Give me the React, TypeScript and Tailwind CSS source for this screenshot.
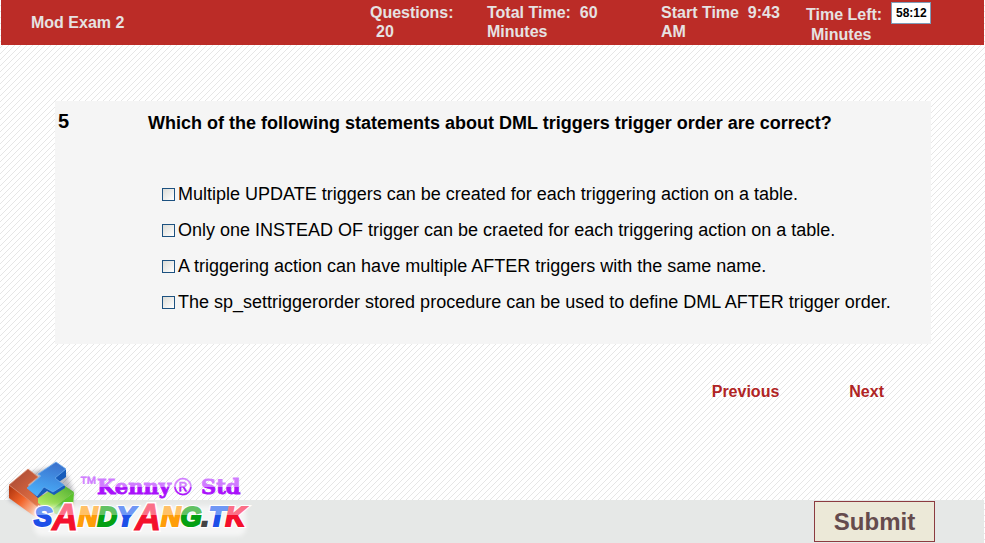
import { useState } from "react";

const options = [
  "Multiple UPDATE triggers can be created for each triggering action on a table.",
  "Only one INSTEAD OF trigger can be craeted for each triggering action on a table.",
  "A triggering action can have multiple AFTER triggers with the same name.",
  "The sp_settriggerorder stored procedure can be used to define DML AFTER trigger order.",
];

const letterColors: Record<string, [string, string]> = {
  blue: ["#6f97f5", "#1d4fe8"],
  red: ["#fb7088", "#f4102c"],
  orange: ["#ffc168", "#ff9d08"],
  green: ["#62c163", "#04a012"],
  grey: ["#777777", "#444444"],
};

const letters: [string, string][] = [
  ["S", "blue"],
  ["A", "red"],
  ["N", "orange"],
  ["D", "green"],
  ["Y", "blue"],
  ["A", "red"],
  ["N", "orange"],
  ["G", "green"],
  [".", "grey"],
  ["T", "blue"],
  ["K", "red"],
];

function Header() {
  return (
    <header className="mx-px flex h-[45px] items-start bg-[#bb2c27] text-base leading-[19px] font-bold text-[#e6e2e2]">
      <h1 className="flex-1 pt-[13px] pl-[30px]">Mod Exam 2</h1>
      <p className="w-[117px] pt-[3px]">
        Questions:
        <br />
        <span className="pl-1.5">20</span>
      </p>
      <p className="w-[174px] pt-[3px]">
        Total Time:&nbsp; 60
        <br />
        Minutes
      </p>
      <p className="w-[145px] pt-[3px]">
        Start Time&nbsp; 9:43
        <br />
        AM
      </p>
      <div className="w-[178px]">
        <div className="flex h-[25px] items-start">
          <label htmlFor="time-left" className="w-[85px] pt-[5px]">
            Time Left:
          </label>
          <input
            id="time-left"
            readOnly
            defaultValue="58:12"
            className="mt-0.5 h-[22px] w-10 border border-[#7f9db9] bg-white pl-1 text-xs font-bold text-black"
          />
        </div>
        <p className="pl-[5px]">Minutes</p>
      </div>
    </header>
  );
}

function Logo() {
  return (
    <svg
      className="absolute bottom-0 left-0"
      width="260"
      height="88"
      viewBox="0 0 260 88"
      role="img"
      aria-label="Kenny Std, SANDYANG.TK"
    >
      <defs>
        <linearGradient id="redTop" x1="0" y1="0" x2="1" y2="1">
          <stop offset="0" stopColor="#a04634" />
          <stop offset="0.5" stopColor="#cc5f3c" />
          <stop offset="1" stopColor="#f0844c" />
        </linearGradient>
        <linearGradient id="redSide" x1="0" y1="0" x2="1" y2="1">
          <stop offset="0" stopColor="#a8300c" />
          <stop offset="0.45" stopColor="#f2642a" />
          <stop offset="1" stopColor="#fff0e0" />
        </linearGradient>
        <linearGradient id="blueTop" x1="0.7" y1="0" x2="0.4" y2="1">
          <stop offset="0" stopColor="#3a70cc" />
          <stop offset="1" stopColor="#4ab0fa" />
        </linearGradient>
        <linearGradient id="greenTop" x1="1" y1="0" x2="0" y2="1">
          <stop offset="0" stopColor="#4fae30" />
          <stop offset="1" stopColor="#c4f86c" />
        </linearGradient>
        <linearGradient id="purple" gradientUnits="userSpaceOnUse" x1="0" y1="22" x2="0" y2="44">
          <stop offset="0.45" stopColor="#d07cff" />
          <stop offset="0.45" stopColor="#a911fb" />
        </linearGradient>
        {Object.entries(letterColors).map(([name, [light, dark]]) => (
          <linearGradient key={name} id={name} gradientUnits="userSpaceOnUse" x1="0" y1="50" x2="0" y2="72">
            <stop offset="0.45" stopColor={light} />
            <stop offset="0.45" stopColor={dark} />
          </linearGradient>
        ))}
        <filter id="soft" x="-20%" y="-20%" width="140%" height="140%">
          <feGaussianBlur stdDeviation="2" />
        </filter>
      </defs>

      <path d="M9 33 L28 18 L56 11 L67 20 L74 38 L71 54 L44 62 L9 45Z" fill="#556" opacity="0.4" filter="url(#soft)" />
      {/* red block */}
      <path d="M9 30 L38 51 L38 64 L9 43Z" fill="url(#redSide)" />
      <path d="M9 30 L28 14 L38 22 L28 30 L47 44 L38 52Z" fill="url(#redTop)" stroke="#dc8a6c" strokeWidth="0.8" />
      {/* green block */}
      <path d="M38 43 L50 36 L56 38 L65 31 L74 37 L50 56 L38 48Z" fill="url(#greenTop)" />
      <path d="M50 56 L74 37 L73 51 L58 60Z" fill="#5cc42c" />
      <path d="M38 50 L50 57 L44 64 L36 62Z" fill="#ffe6cc" />
      {/* blue block */}
      <path d="M66 14 L66 22 L59 27 L65 31 L65 33 L54 40 L47 36 L38 43 L28 34 L60 18Z" fill="#175cba" />
      <path
        d="M56 7 L66 14 L55 23 L64 30 L53 37 L44 32 L37 41 L27 33 L41 21 L38 19Z"
        fill="url(#blueTop)"
        stroke="#6aa8ec"
        strokeWidth="0.8"
        strokeLinejoin="round"
      />
      <rect x="34" y="51" width="212" height="30" rx="8" fill="#fff" opacity="0.6" filter="url(#soft)" />

      <g fill="#d07cff" stroke="#d07cff" strokeWidth="0.5" className="font-['Liberation_Sans',Arial,sans-serif]">
        <text x="79" y="34" fontSize="18">
          ™
        </text>
      </g>
      <g fill="url(#purple)" stroke="url(#purple)" fontSize="21" className="font-['DejaVu_Serif',serif] font-bold">
        <text x="97" y="39" strokeWidth="0.8">
          Kenny
        </text>
        <text x="174" y="40" fontSize="24" strokeWidth="0.4" className="font-['Liberation_Sans',Arial,sans-serif] font-normal">
          ®
        </text>
        <text x="201" y="39" strokeWidth="0.8">
          Std
        </text>
      </g>
      {["outline", "fill"].map((layer) => (
        <text
          key={layer}
          x="34"
          y="72"
          strokeLinejoin="miter"
          aria-hidden={layer === "outline"}
          className="font-['Liberation_Sans',Arial,sans-serif] font-bold italic"
        >
          {letters.map(([letter, color], i) => (
            <tspan
              key={i}
              fontSize={letter === "A" ? 36 : 27}
              y={letter === "A" ? 75 : 71}
              fill={layer === "outline" ? "#fff" : `url(#${color})`}
              stroke={layer === "outline" ? "#fff" : `url(#${color})`}
              strokeWidth={layer === "outline" ? 4 : letter === "A" ? 1 : 2}
            >
              {letter}
            </tspan>
          ))}
        </text>
      ))}
    </svg>
  );
}

export default function App() {
  const [checked, setChecked] = useState<boolean[]>(options.map(() => false));

  return (
    <div className="relative flex min-h-screen flex-col bg-white bg-[linear-gradient(135deg,#e6e6e6_8%,transparent_8%_46%,#e6e6e6_46%_58%,transparent_58%)] bg-size-[6px_6px] font-['Liberation_Sans',Arial,sans-serif] text-black">
      <Header />
      <main className="flex-1 pr-[54px] pl-[55px]">
        <section className="mt-14 flex bg-[#f5f5f5] pb-6">
          <p className="w-[93px] pt-2 pl-[3px] text-xl leading-6 font-bold">5</p>
          <fieldset className="min-w-0 flex-1">
            <legend className="pt-[10px] text-lg leading-6 font-bold">
              Which of the following statements about DML triggers trigger order are correct?
            </legend>
            <div className="mt-[41px] pl-[14px]">
              {options.map((text, i) => (
                <label key={text} className="flex h-9 items-center gap-[3px] text-lg leading-6">
                  <input
                    type="checkbox"
                    checked={checked[i]}
                    onChange={() => setChecked(checked.map((c, j) => (j === i ? !c : c)))}
                    className="size-[13px] shrink-0 appearance-none border border-[#1c5180] bg-linear-to-br from-[#dcdcd7] to-white checked:bg-[#1c5180]"
                  />
                  {text}
                </label>
              ))}
            </div>
          </fieldset>
        </section>
        <nav className="mt-[38px] flex justify-end gap-[70px] pr-[47px] text-base leading-5 font-bold text-[#b02424]">
          <a href="#previous">Previous</a>
          <a href="#next">Next</a>
        </nav>
      </main>
      <footer className="mr-px flex h-[43px] items-center justify-end bg-[#e6e8e7] pr-[49px]">
        <button
          type="button"
          className="h-[41px] w-[121px] border border-[#8c3b40] bg-[#ece9d8] text-2xl font-bold text-[#654b4d]"
        >
          Submit
        </button>
      </footer>
      <Logo />
    </div>
  );
}
